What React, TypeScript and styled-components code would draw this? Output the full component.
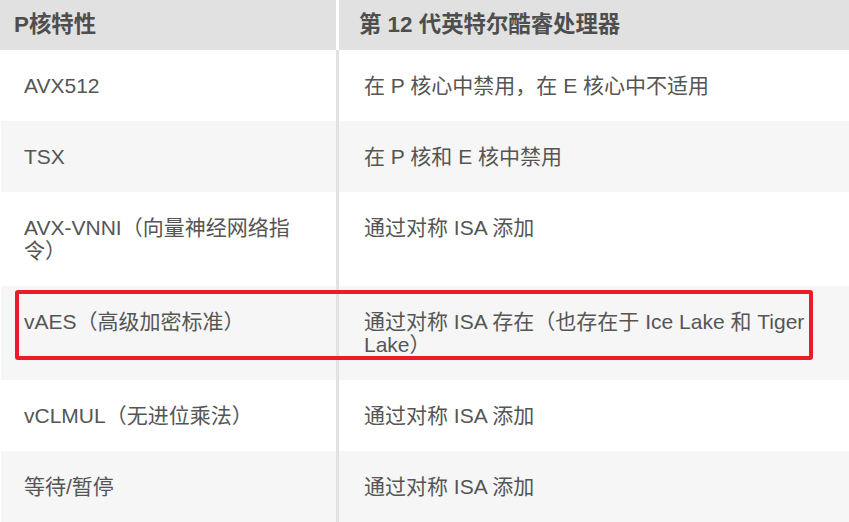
import React from "react";
import styled, { createGlobalStyle } from "styled-components";

const GlobalStyle = createGlobalStyle`
  html, body {
    margin: 0;
    padding: 0;
    background: #ffffff;
  }
  body {
    font-family: "Liberation Sans", Arial, "Noto Sans CJK SC", sans-serif;
  }
  * { box-sizing: border-box; }
`;

const Table = styled.div`
  width: 849px;
  display: flex;
  flex-direction: column;
`;

const HeadRow = styled.div`
  display: grid;
  grid-template-columns: 339px 1fr;
  height: 50px;
  background: #e1e1e1;
`;

const HeadCell = styled.div<{ $first?: boolean }>`
  display: flex;
  align-items: center;
  padding-left: ${(p) => (p.$first ? "14px" : "20px")};
  border-right: ${(p) => (p.$first ? "3px solid #ffffff" : "none")};
  font-size: 22.4px;
  font-weight: 700;
  color: #4e4e4e;
  line-height: 26px;
`;

const Row = styled.div<{ $alt?: boolean }>`
  position: relative;
  display: grid;
  grid-template-columns: 339px 1fr;
  background: ${(p) => (p.$alt ? "#f6f6f6" : "#ffffff")};
`;

const Cell = styled.div<{ $first?: boolean }>`
  padding: 24px ${(p) => (p.$first ? "30px" : "24px")} 24px ${(p) => (p.$first ? "23px" : "25px")};
  border-left: ${(p) => (p.$first ? "1px solid #ffffff" : "none")};
  border-right: ${(p) => (p.$first ? "3px solid #e2e2e2" : "none")};
  font-size: 21px;
  line-height: 23px;
  color: #555555;
`;

const Highlight = styled.div`
  position: absolute;
  left: 15px;
  top: 4px;
  width: 798px;
  height: 70px;
  border: 4px solid #ea1c27;
  border-radius: 3px;
  pointer-events: none;
`;

const rows: { a: string; b: string; mark?: boolean }[] = [
  { a: "AVX512", b: "在 P 核心中禁用，在 E 核心中不适用" },
  { a: "TSX", b: "在 P 核和 E 核中禁用" },
  { a: "AVX-VNNI（向量神经网络指令）", b: "通过对称 ISA 添加" },
  { a: "vAES（高级加密标准）", b: "通过对称 ISA 存在（也存在于 Ice Lake 和 Tiger Lake）", mark: true },
  { a: "vCLMUL（无进位乘法）", b: "通过对称 ISA 添加" },
  { a: "等待/暂停", b: "通过对称 ISA 添加" },
];

export default function App() {
  return (
    <>
      <GlobalStyle />
      <Table>
        <HeadRow>
          <HeadCell $first>P核特性</HeadCell>
          <HeadCell>第 12 代英特尔酷睿处理器</HeadCell>
        </HeadRow>
        {rows.map((r, i) => (
          <Row key={i} $alt={i % 2 === 1}>
            <Cell $first>{r.a}</Cell>
            <Cell>{r.b}</Cell>
            {r.mark && <Highlight />}
          </Row>
        ))}
      </Table>
    </>
  );
}
